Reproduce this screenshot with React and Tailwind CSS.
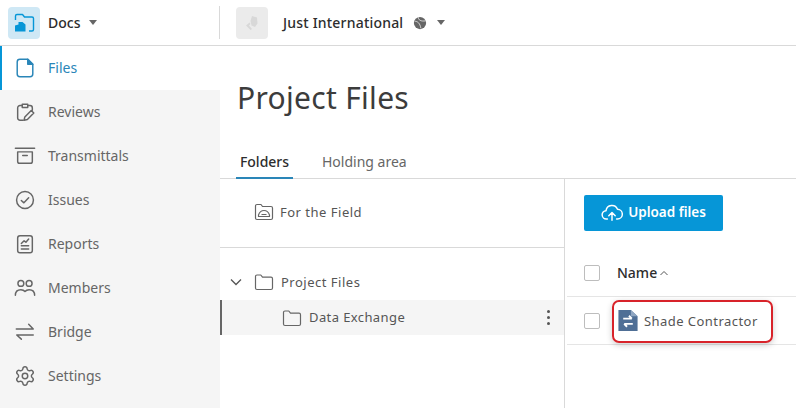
import React from 'react';
import { Settings } from 'lucide-react';

const Icon = ({ children, className = '' }) => (
  <svg viewBox="0 0 24 24" fill="none" stroke="currentColor" strokeWidth="1.6" strokeLinecap="round" strokeLinejoin="round" className={className}>
    {children}
  </svg>
);

const navItems = [
  {
    label: 'Files',
    active: true,
    icon: (
      <>
        <path d="M6.500 2.500h8.500l5.500 5.500V18.500a3 3 0 0 1-3 3H6.500a3 3 0 0 1-3-3v-13a3 3 0 0 1 3-3z" />
        <path d="M15 2.500l5.500 5.500H15z" fill="currentColor" />
      </>
    ),
  },
  {
    label: 'Reviews',
    icon: (
      <>
        <path d="M9 5H6.500A2.500 2.500 0 0 0 4 7.500v11A2.500 2.500 0 0 0 6.500 21H10M15 5h2.500A2.500 2.500 0 0 1 20 7.500V10" />
        <path d="M9 3.500h6V7H9zM11 21l.8-3.600 7-7 2.800 2.800-7 7z" />
      </>
    ),
  },
  {
    label: 'Transmittals',
    icon: (
      <>
        <path d="M1.500 3.500h21M4 7.500v10.500a2 2 0 0 0 2 2h12a2 2 0 0 0 2-2V7.500z" />
        <path d="M9.500 11.500h5" />
      </>
    ),
  },
  {
    label: 'Issues',
    icon: (
      <>
        <circle cx="12" cy="12" r="9.200" />
        <path d="M8 12.500l2.800 2.600L16 9.500" />
      </>
    ),
  },
  {
    label: 'Reports',
    icon: (
      <>
        <rect x="4" y="3" width="16" height="18.500" rx="2.500" />
        <path d="M8 11.500l3-3 2 1.500 3-3.500M8 14h8M8 17.500h8" />
      </>
    ),
  },
  {
    label: 'Members',
    icon: (
      <>
        <circle cx="7.500" cy="7" r="3.200" />
        <circle cx="16.500" cy="7" r="3.200" />
        <path d="M1.500 20c0-4 2.500-6.200 6-6.200 2 0 3.500.7 4.500 2 1-1.300 2.500-2 4.500-2 3.500 0 6 2.200 6 6.200" />
      </>
    ),
  },
  {
    label: 'Bridge',
    icon: <path d="M2.500 8.700h18.500l-5-5.200M21 15.300H3l5 4.500" />,
  },
  {
    label: 'Settings',
    lucide: true,
  },
];

const Caret = ({ className = '' }) => (
  <span className={`w-0 h-0 border-x-[4.5px] border-x-transparent border-t-[5px] border-t-[#666666] ${className}`} />
);

const Folder = ({ className = '' }) => (
  <svg viewBox="0 0 20 20" fill="none" stroke="#666666" strokeWidth="1.200" strokeLinejoin="round" className={className}>
    <path d="M1.500 4.500A1.500 1.500 0 0 1 3 3h3.800l1.700 2.200H17A1.500 1.500 0 0 1 18.500 6.700v9.300a1.500 1.500 0 0 1-1.500 1.500H3A1.500 1.500 0 0 1 1.500 16z" />
  </svg>
);

const Checkbox = () => <span className="block w-4 h-4 border border-[#bdbdbd] rounded-[2px] bg-white" />;

export default function App() {
  return (
    <div className="w-[796px] h-[408px] overflow-hidden bg-white text-[#3c3c3c] font-['Noto_Sans',sans-serif] text-sm flex flex-col">
      <header className="h-[46px] shrink-0 flex items-center border-b border-[#d9d9d9]">
        <div className="w-[220px] h-[33px] flex items-center pl-2 border-r border-[#d9d9d9]">
          <div className="w-8 h-8 rounded bg-[#cfe8f5] flex items-center justify-center">
            <svg viewBox="0 0 24 24" className="w-6 h-6" fill="none" stroke="#0696d7" strokeWidth="1.400" strokeLinejoin="round">
              <path d="M3.500 9V5a1.500 1.500 0 0 1 1.500-1.500h5.500l2 2.500H20A1.500 1.500 0 0 1 21.500 7.500v11A1.500 1.500 0 0 1 20 20h-3" />
              <path d="M3 20.500v-6l3.500-1v-2.500l4 0 3 2.500v7z" fill="#0696d7" stroke="none" />
            </svg>
          </div>
          <span className="ml-2 font-medium text-[#2d2d2d] text-sm">Docs</span>
          <Caret className="ml-[9px]" />
        </div>
        <div className="flex items-center pl-4">
          <div className="w-8 h-8 rounded bg-[#ebebeb] flex items-center justify-center">
            <svg viewBox="0 0 24 24" className="w-6 h-6" fill="#d8d8d8">
              <path d="M12 5l5 1.500.5 6-2.500 3.500-3.500-1.500-1-4.500zM9.500 11.500l-3.500 3 4.500 4.500 1.500-1-3-3.500 1.500-1.500z" />
            </svg>
          </div>
          <span className="ml-[15px] font-medium text-[#2d2d2d] text-sm tracking-[0.2px]">Just International</span>
          <svg viewBox="0 0 16 16" className="ml-[10px] w-[14px] h-[14px]">
            <circle cx="8" cy="8" r="7" fill="#666666" />
            <path d="M2 6c3 0 6 2 7 8M6 1.500c0 3 3 5 8.500 4" fill="none" stroke="#ffffff" strokeWidth="0.800" />
          </svg>
          <Caret className="ml-[10px]" />
        </div>
      </header>

      <div className="flex-1 flex min-h-0">
        <nav className="w-[220px] shrink-0 bg-[#f5f5f5]">
          {navItems.map((item) => (
            <div
              key={item.label}
              className={`h-11 flex items-center ${item.active ? 'bg-white border-l-2 border-[#0696d7] text-[#2a86b8] pl-[12px]' : 'text-[#666666] pl-[14px]'}`}
            >
              {item.lucide ? (
                <Settings className="w-[22px] h-[22px] shrink-0" strokeWidth={1.600} />
              ) : (
                <Icon className="w-[22px] h-[22px] shrink-0">{item.icon}</Icon>
              )}
              <span className="ml-3">{item.label}</span>
            </div>
          ))}
        </nav>

        <main className="flex-1 min-w-0 flex flex-col">
          <h1 className="pl-[17px] pt-[30px] h-[102px] text-[30px] leading-[44px] text-[#3c3c3c] tracking-[0.3px]">Project Files</h1>

          <div className="h-[31px] flex border-b border-[#d9d9d9] pl-4">
            <div className="w-[57px] h-[31px] flex justify-center pt-[4px] border-b-2 border-[#2a86b8] font-medium text-[#2d2d2d]">Folders</div>
            <div className="ml-[29px] pt-[4px] text-[#666666]">Holding area</div>
          </div>

          <div className="flex-1 flex min-h-0">
            <div className="w-[345px] shrink-0 border-r border-[#d9d9d9] flex flex-col text-[#555555]">
              <div className="h-[69px] border-b border-[#d9d9d9] flex items-start pl-[34px] pt-[23px]">
                <svg viewBox="0 0 20 20" className="w-5 h-5" fill="none" stroke="#666666" strokeWidth="1.200" strokeLinejoin="round">
                  <path d="M1.500 4A1.500 1.500 0 0 1 3 2.500h4l1.500 2H17A1.500 1.500 0 0 1 18.500 6v10a1.500 1.500 0 0 1-1.500 1.500H3A1.500 1.500 0 0 1 1.500 16z" />
                  <path d="M4.500 14.500v-1.500c1-3 3-4.500 5.500-4.500s4.500 1.500 5.500 4.500v1.500zM7.500 12.500h5" />
                </svg>
                <span className="ml-[6px] leading-[20px] text-[13px] tracking-[0.5px]">For the Field</span>
              </div>
              <div className="h-[52px] flex items-end pb-[1px] pl-[10px]">
                <div className="flex items-center h-[34px]">
                  <svg viewBox="0 0 12 12" className="w-3 h-3" fill="none" stroke="#555555" strokeWidth="1.300">
                    <path d="M1 3.500l5 5 5-5" />
                  </svg>
                  <Folder className="ml-[12px] w-5 h-5" />
                  <span className="ml-[7px] text-[13px] tracking-[0.5px]">Project Files</span>
                </div>
              </div>
              <div className="h-[35px] bg-[#f5f5f5] border-l-2 border-[#666666] flex items-center pl-[60px] pr-[14px]">
                <Folder className="w-5 h-5" />
                <span className="ml-[7px] flex-1 text-[13px] tracking-[0.4px]">Data Exchange</span>
                <span className="flex flex-col gap-[3px]">
                  <span className="w-[3px] h-[3px] rounded-full bg-[#555555]" />
                  <span className="w-[3px] h-[3px] rounded-full bg-[#555555]" />
                  <span className="w-[3px] h-[3px] rounded-full bg-[#555555]" />
                </span>
              </div>
            </div>

            <div className="flex-1 min-w-0 pl-[2px]">
              <div className="pl-[17px] pt-[16px]">
                <button className="w-[139px] h-9 rounded-[2px] bg-[#0696d7] text-white font-semibold text-[13.5px] flex items-center justify-center gap-[5px]">
                  <svg viewBox="0 0 24 24" className="w-[22px] h-[22px]" fill="none" stroke="#ffffff" strokeWidth="1.600" strokeLinecap="round" strokeLinejoin="round">
                    <path d="M7 18.500H6a4.500 4.500 0 0 1-.5-9A6.500 6.500 0 0 1 18 8a5 5 0 0 1 0 10.500h-1" />
                    <path d="M12 20v-8M8.500 15l3.500-3.500 3.500 3.500" />
                  </svg>
                  Upload files
                </button>
              </div>
              <div className="h-[48px] mt-[18px] flex items-center pl-[17px] border-b border-[#e5e5e5]">
                <Checkbox />
                <span className="ml-[17px] pt-[1px] font-medium text-sm text-[#2d2d2d]">Name</span>
                <svg viewBox="0 0 10 10" className="ml-[2px] w-[10px] h-[10px]" fill="none" stroke="#555555" strokeWidth="1">
                  <path d="M1.500 7l3.500-3.500L8.500 7" />
                </svg>
              </div>
              <div className="h-[48px] flex items-center pl-[17px] border-b border-[#e5e5e5]">
                <Checkbox />
                <div className="relative ml-[18px] flex items-center">
                  <svg viewBox="0 0 20 24" className="w-[20px] h-[23px]">
                    <path d="M0 1h13l7 6.500V23H0z" fill="#4f6f96" />
                    <path d="M13 1l7 6.500h-7z" fill="#8fa6c2" />
                    <path d="M5 10h9M11 7l3 3M15 15.500H6M9 18.500l-3-3" fill="none" stroke="#ffffff" strokeWidth="2" />
                  </svg>
                  <span className="ml-[6px] pt-[1px] text-[13px] text-[#555555] tracking-[0.45px]">Shade Contractor</span>
                  <span className="absolute -left-[6px] -top-[9px] w-[161px] h-[43px] rounded-[7px] border-2 border-[#d8232a] shadow-[0_2px_6px_rgba(0,0,0,0.2)]" />
                </div>
              </div>
            </div>
          </div>
        </main>
      </div>
    </div>
  );
}
